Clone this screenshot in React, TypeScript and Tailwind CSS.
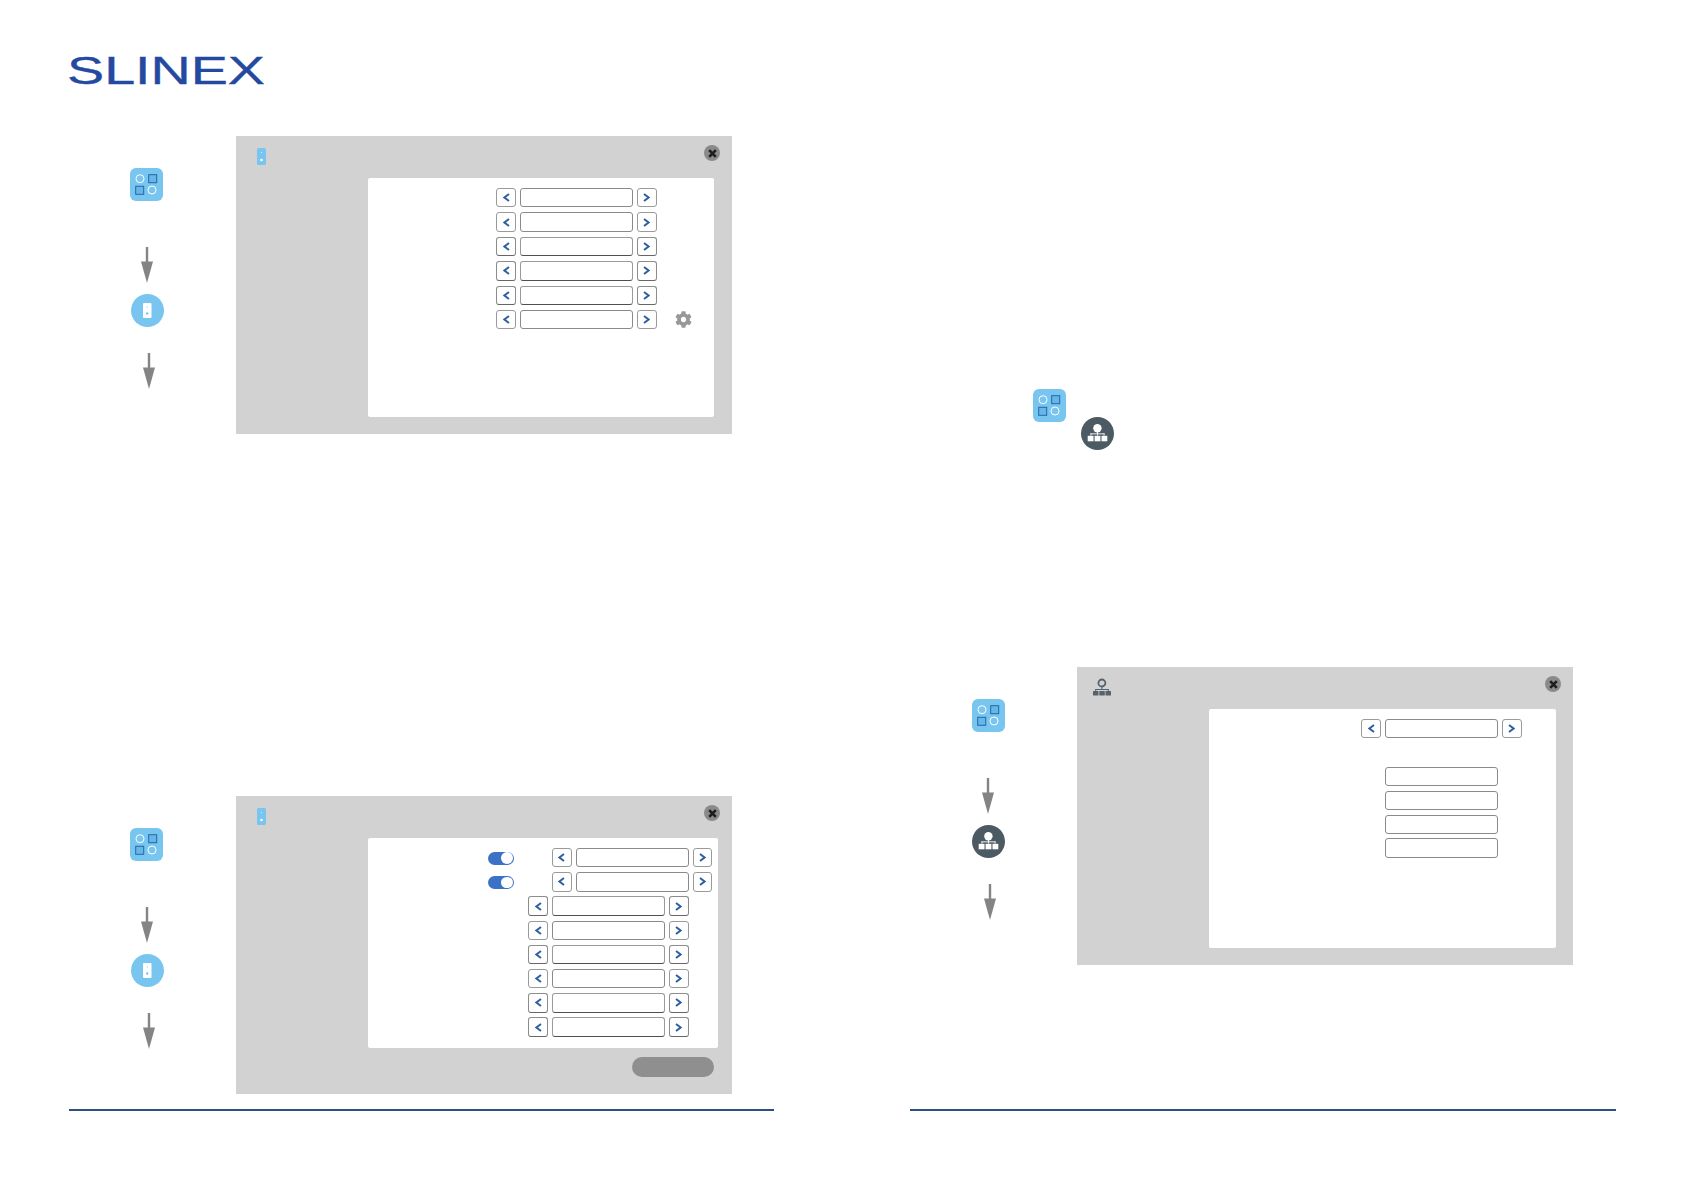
import { FaCog } from "react-icons/fa";

function GridIcon({ shift }: { shift?: boolean }) {
  return (
    <div className={`w-[33px] h-[33px] rounded-[6px] bg-[#78c5ef] shrink-0 ${shift ? "-ml-[1px]" : ""}`}>
      <svg width="33" height="33" viewBox="0 0 33 33" fill="none">
        <circle cx="10" cy="10.7" r="4" stroke="#ffffff" strokeWidth="1" />
        <circle cx="22" cy="22" r="4" stroke="#ffffff" strokeWidth="1" />
        <rect x="18.7" y="6.7" width="8" height="8" fill="#68b6e6" stroke="#1f69a8" strokeWidth="1" />
        <rect x="5.7" y="18.3" width="8" height="8" fill="#68b6e6" stroke="#1f69a8" strokeWidth="1" />
      </svg>
    </div>
  );
}

function Arrow() {
  return (
    <svg width="14" height="36" viewBox="0 0 14 36" className="block">
      <rect x="5.8" y="0" width="2.4" height="16" fill="#848484" />
      <path d="M1 14.5 H13 L7 36 Z" fill="#848484" />
    </svg>
  );
}

function DoorCircle() {
  return (
    <div className="w-[33px] h-[33px] rounded-full bg-[#78c5ef] flex items-center justify-center shrink-0">
      <svg width="9" height="15" viewBox="0 0 9 15">
        <rect x="0" y="0" width="8.5" height="15" rx="1" fill="#ffffff" />
        <circle cx="4.2" cy="4" r="0.6" fill="#78c5ef" />
        <circle cx="4.2" cy="10.5" r="1.2" fill="#78c5ef" />
      </svg>
    </div>
  );
}

function DoorSmall() {
  return (
    <svg width="9" height="17" viewBox="0 0 9 17" className="block">
      <rect x="0" y="0" width="9" height="17" rx="1.5" fill="#78c5ef" />
      <circle cx="4.5" cy="4.5" r="0.5" fill="#ffffff" />
      <circle cx="4.5" cy="12" r="1.3" fill="#ffffff" />
    </svg>
  );
}

function NetworkCircle() {
  return (
    <div className="w-[33px] h-[33px] rounded-full bg-[#4c5a63] flex items-center justify-center shrink-0">
      <svg width="33" height="33" viewBox="0 0 33 33" fill="#ffffff">
        <circle cx="16.4" cy="11.3" r="4.2" />
        <rect x="16" y="14" width="0.9" height="4.5" />
        <rect x="9.5" y="16.4" width="14" height="0.9" />
        <rect x="9.5" y="16.4" width="0.9" height="2.2" />
        <rect x="22.6" y="16.4" width="0.9" height="2.2" />
        <rect x="6.7" y="18.8" width="5.8" height="5.5" />
        <rect x="13.6" y="18.8" width="5.8" height="5.5" />
        <rect x="20.5" y="18.8" width="5.8" height="5.5" />
      </svg>
    </div>
  );
}

function NetworkSmall() {
  return (
    <svg width="18" height="18" viewBox="0 0 18 18" className="block" fill="#56636c">
      <circle cx="8.9" cy="5" r="3.5" fill="none" stroke="#56636c" strokeWidth="1.8" />
      <rect x="8.4" y="8" width="1" height="4" />
      <rect x="2.5" y="11" width="13" height="1" />
      <rect x="2.2" y="11" width="1" height="2.5" />
      <rect x="14.8" y="11" width="1" height="2.5" />
      <rect x="0" y="13" width="5.5" height="4.6" rx="0.5" />
      <rect x="6.3" y="13" width="5.5" height="4.6" rx="0.5" />
      <rect x="12.5" y="13" width="5.5" height="4.6" rx="0.5" />
    </svg>
  );
}

function CloseBtn() {
  return (
    <div className="w-[16px] h-[16px] rounded-full bg-[#8a8a8a] flex items-center justify-center">
      <svg width="9" height="9" viewBox="0 0 9 9">
        <path d="M1.2 1.2 L7.8 7.8 M7.8 1.2 L1.2 7.8" stroke="#1d1d1d" strokeWidth="2.6" />
      </svg>
    </div>
  );
}

function Chevron({ right }: { right?: boolean }) {
  return (
    <svg width="7" height="9" viewBox="0 0 7 9" fill="none">
      <path d={right ? "M1 1 L5.6 4.5 L1 8" : "M6 1 L1.4 4.5 L6 8"} stroke="#2f5f9f" strokeWidth="2" />
    </svg>
  );
}

function Stepper({ dark }: { dark?: boolean }) {
  const edge = dark ? "border-[#8c8c8c] border-b-[#666666]" : "border-[#9a9a9a]";
  return (
    <div className="flex items-center gap-[4px]">
      <div className={`w-[20px] h-[19.4px] border rounded-[3px] bg-white flex items-center justify-center ${edge}`}>
        <Chevron />
      </div>
      <Field dark={dark} />
      <div className={`w-[19.5px] h-[19.4px] border rounded-[3px] bg-white flex items-center justify-center ${edge}`}>
        <Chevron right />
      </div>
    </div>
  );
}

function Field({ dark }: { dark?: boolean }) {
  const edge = dark ? "border-[#9a9a9a] border-b-[#505050]" : "border-[#8a8a8a]";
  return <div className={`w-[113px] h-[19.4px] border rounded-[3px] bg-white ${edge}`} />;
}

function Toggle() {
  return (
    <div className="w-[25.5px] h-[13px] mt-[1px] rounded-full bg-[#3b72c6] flex items-center justify-end pr-[1px]">
      <div className="w-[11.5px] h-[11.5px] rounded-full bg-white" />
    </div>
  );
}

function PanelHeader({ icon, left }: { icon: React.ReactNode; left: string }) {
  return (
    <div className={`h-[42px] flex items-start justify-between pt-[9px] pr-[12px] ${left}`}>
      <div className="pt-[3px]">{icon}</div>
      <CloseBtn />
    </div>
  );
}

function Steps({ circle, shift }: { circle: React.ReactNode; shift?: boolean }) {
  return (
    <div className="w-[105px] shrink-0 pt-[32px] flex flex-col items-start">
      <GridIcon shift={shift} />
      <div className="mt-[46px] ml-[9px]">
        <Arrow />
      </div>
      <div className="mt-[11px]">{circle}</div>
      <div className="mt-[26px] ml-[11px]">
        <Arrow />
      </div>
    </div>
  );
}

export default function App() {
  return (
    <div className="w-[1684px] h-[1191px] bg-white flex overflow-hidden">
      {/* left page */}
      <div className="w-[842px] shrink-0 flex flex-col">
        <svg width="204" height="50" viewBox="0 0 204 50" className="block ml-[66px] mt-[44px]">
          <text
            x="1"
            y="39.5"
            fontFamily="'Liberation Sans', sans-serif"
            fontSize="39"
            fill="#2449a0"
            stroke="#2449a0"
            strokeWidth="0.35"
            textLength="198"
            lengthAdjust="spacingAndGlyphs"
          >
            SLINEX
          </text>
        </svg>

        <div className="flex ml-[131px] mt-[42px]">
          <Steps circle={<DoorCircle />} shift />
          <div className="w-[496px] h-[298px] bg-[#d2d2d2] flex flex-col">
            <PanelHeader icon={<DoorSmall />} left="pl-[21px]" />
            <div className="ml-[132px] w-[346px] h-[239px] bg-white rounded-[2px] pl-[128px] pt-[10px] flex flex-col gap-[5px]">
              <Stepper />
              <Stepper />
              <Stepper dark />
              <Stepper dark />
              <Stepper dark />
              <div className="flex items-center">
                <Stepper />
                <FaCog className="ml-[18.5px] text-[#989898] text-[17px]" />
              </div>
            </div>
          </div>
        </div>

        <div className="flex ml-[131px] mt-[362px]">
          <Steps circle={<DoorCircle />} shift />
          <div className="w-[496px] h-[298px] bg-[#d2d2d2] flex flex-col">
            <PanelHeader icon={<DoorSmall />} left="pl-[21px]" />
            <div className="ml-[132px] w-[350px] h-[210px] bg-white rounded-[2px] pt-[10px] flex flex-col gap-[4.8px]">
              <div className="flex items-center pl-[120px]">
                <Toggle />
                <div className="ml-[38px]">
                  <Stepper />
                </div>
              </div>
              <div className="flex items-center pl-[120px]">
                <Toggle />
                <div className="ml-[38px]">
                  <Stepper />
                </div>
              </div>
              <div className="pl-[160px] flex flex-col gap-[4.8px]">
                <Stepper dark />
                <Stepper />
                <Stepper dark />
                <Stepper />
                <Stepper dark />
                <Stepper dark />
              </div>
            </div>
            <div className="self-end mt-[9px] mr-[18px] w-[82px] h-[20px] rounded-full bg-[#8f8f8f]" />
          </div>
        </div>

        <div className="ml-[69px] mt-[15px] w-[705px] h-[1.5px] bg-[#2f4f80]" />
      </div>

      {/* right page */}
      <div className="w-[842px] shrink-0 flex flex-col">
        <div className="flex ml-[191px] mt-[389px] h-[60px] gap-[15px]">
          <GridIcon />
          <div className="mt-[28px]">
            <NetworkCircle />
          </div>
        </div>

        <div className="flex ml-[130px] mt-[218px]">
          <Steps circle={<NetworkCircle />} />
          <div className="w-[496px] h-[298px] bg-[#d2d2d2] flex flex-col">
            <div className="h-[42px] flex items-start justify-between pt-[9px] pr-[12px] pl-[16px]">
              <div className="pt-[2px]">
                <NetworkSmall />
              </div>
              <CloseBtn />
            </div>
            <div className="ml-[132px] w-[347px] h-[239px] bg-white rounded-[2px] pl-[152px] pt-[10px] flex flex-col">
              <Stepper />
              <div className="mt-[28.6px] ml-[24px] flex flex-col gap-[4.4px]">
                <Field />
                <Field />
                <Field />
                <Field />
              </div>
            </div>
          </div>
        </div>

        <div className="ml-[68px] mt-[144px] w-[706px] h-[1.5px] bg-[#2f4f80]" />
      </div>
    </div>
  );
}
